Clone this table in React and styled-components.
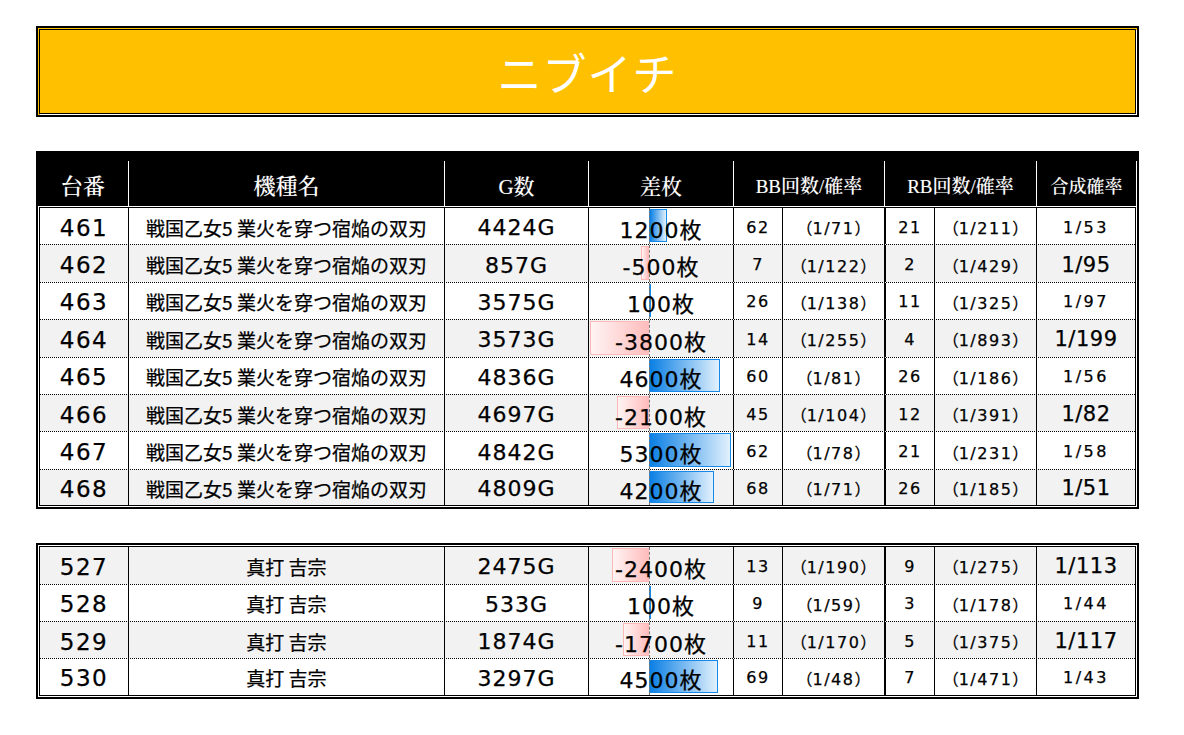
import React from "react";
import styled, { createGlobalStyle } from "styled-components";

const GlobalStyle = createGlobalStyle`
  body {
    margin: 0;
    background: #fff;
    font-family: "DejaVu Sans", "Noto Sans CJK JP", sans-serif;
  }
`;

const Page = styled.div`
  width: 1103px;
  padding: 26px 0 30px 36px;
  display: flex;
  flex-direction: column;
`;

const TitleFrame = styled.div`
  border: 2px solid #000;
  padding: 1px;
  background: #ffc000;
`;

const TitleInner = styled.div`
  border: 1px solid #000;
  box-shadow: 1px 1px 0 #fff;
  height: 83px;
  display: flex;
  align-items: center;
  justify-content: center;
  color: #fff;
  font-family: "Noto Sans CJK JP", sans-serif;
  font-size: 44px;
  letter-spacing: 1px;
`;

const Frame = styled.div`
  border: 2px solid #000;
  background: #fff;
  margin-top: ${(p) => p.$gap}px;
`;

const Header = styled.div`
  background: #000;
  padding-top: 8px;
  display: grid;
  grid-template-columns: 91px 316px 144px 145px 151px 152px 1fr;
  height: 45px;
`;

const HeadCell = styled.div`
  border-right: 1px solid #fff;
  display: flex;
  align-items: center;
  justify-content: center;
  color: #fff;
  font-family: "Liberation Serif", "Noto Serif CJK JP", "Noto Sans CJK JP", serif;
  font-size: ${(p) => p.$size}px;
  font-weight: 500;
  text-shadow: 0 0 1px #555;
  padding-top: 2px;
`;

const Body = styled.div`
  margin: 1px;
  border: 1px solid #000;
`;

const Row = styled.div`
  display: grid;
  grid-template-columns: 89px 316px 144px 145px 49px 103px 49px 102px 1fr;
  height: ${(p) => (p.$first || p.$last ? 36.4 : 37.4)}px;
  background: ${(p) => (p.$shade ? "#f2f2f2" : "#fff")};
  border-top: ${(p) => (p.$first ? "none" : "1px dotted #000")};
  box-sizing: border-box;
`;

const Cell = styled.div`
  position: relative;
  border-right: ${(p) => (p.$thick ? "2px" : p.$end ? "0" : "1px")} solid #000;
  display: flex;
  align-items: center;
  justify-content: center;
  color: #000;
  -webkit-text-stroke: 0.25px #000;
  white-space: nowrap;
  overflow: hidden;
`;

const BigNum = styled.span`
  font-family: "DejaVu Sans", sans-serif;
  font-size: 23px;
  letter-spacing: 1.5px;
  padding-top: 3px;
`;

const Name = styled.span`
  font-family: "Noto Sans CJK JP", sans-serif;
  font-size: 19px;
  padding-top: 2px;
`;

const MidNum = styled.span`
  position: relative;
  font-family: "DejaVu Sans", "Noto Sans CJK JP", sans-serif;
  font-size: 22px;
  letter-spacing: 1px;
  padding-top: 3px;
`;

const SmallNum = styled.span`
  font-family: "DejaVu Sans", "Noto Sans CJK JP", sans-serif;
  font-size: 16px;
  letter-spacing: 1.5px;
  padding-top: 2px;
`;

const Paren = styled.span`
  font-family: "Noto Sans CJK JP", sans-serif;
  letter-spacing: 0;
`;

const Combined = styled.span`
  font-family: "DejaVu Sans", sans-serif;
  font-size: ${(p) => (p.$big ? 21 : 16)}px;
  letter-spacing: ${(p) => (p.$big ? 0.5 : 2.5)}px;
  padding-top: 2px;
`;

const Axis = styled.div`
  position: absolute;
  left: 60px;
  top: 0;
  bottom: 0;
  border-left: 1px dashed #777;
`;

const Bar = styled.div`
  position: absolute;
  top: 1px;
  bottom: 2px;
  box-sizing: border-box;
  border: 1px solid ${(p) => (p.$neg ? "#ffb8b8" : "#1688e8")};
  background: ${(p) =>
    p.$neg
      ? "linear-gradient(to right, #fff4f4, #ffbcbc)"
      : "linear-gradient(to right, #0a7fe4, #e2f1fd)"};
`;

const AXIS = 60;
const SCALE = 0.0154;

const DiffBar = ({ v }) => {
  const w = Math.max(2, Math.abs(v) * SCALE);
  const style = v < 0 ? { left: AXIS - w, width: w } : { left: AXIS, width: w };
  return (
    <>
      <Bar $neg={v < 0} style={style} />
      <Axis />
    </>
  );
};

const group1 = [
  [461, 4424, 1200, 62, 71, 21, 211, 53],
  [462, 857, -500, 7, 122, 2, 429, 95],
  [463, 3575, 100, 26, 138, 11, 325, 97],
  [464, 3573, -3800, 14, 255, 4, 893, 199],
  [465, 4836, 4600, 60, 81, 26, 186, 56],
  [466, 4697, -2100, 45, 104, 12, 391, 82],
  [467, 4842, 5300, 62, 78, 21, 231, 58],
  [468, 4809, 4200, 68, 71, 26, 185, 51],
];

const group2 = [
  [527, 2475, -2400, 13, 190, 9, 275, 113],
  [528, 533, 100, 9, 59, 3, 178, 44],
  [529, 1874, -1700, 11, 170, 5, 375, 117],
  [530, 3297, 4500, 69, 48, 7, 471, 43],
];

const Prob = ({ n }) => (
  <SmallNum>
    <Paren>（</Paren>1/{n}<Paren>）</Paren>
  </SmallNum>
);

const DataRow = ({ r, name, shade, first, last }) => {
  const [no, g, diff, bb, bbp, rb, rbp, total] = r;
  return (
    <Row $shade={shade} $first={first} $last={last}>
      <Cell><BigNum>{no}</BigNum></Cell>
      <Cell><Name>{name}</Name></Cell>
      <Cell><MidNum>{g}G</MidNum></Cell>
      <Cell>
        <DiffBar v={diff} />
        <MidNum>{diff}枚</MidNum>
      </Cell>
      <Cell><SmallNum>{bb}</SmallNum></Cell>
      <Cell $thick><Prob n={bbp} /></Cell>
      <Cell><SmallNum>{rb}</SmallNum></Cell>
      <Cell><Prob n={rbp} /></Cell>
      <Cell $end><Combined $big={shade}>1/{total}</Combined></Cell>
    </Row>
  );
};

const Table = ({ rows, name, shadeEven }) => (
  <Body>
    {rows.map((r, i) => (
      <DataRow
        key={r[0]}
        r={r}
        name={name}
        shade={(i % 2 === 0) === shadeEven}
        first={i === 0}
        last={i === rows.length - 1}
      />
    ))}
  </Body>
);

const App = () => (
  <Page>
    <GlobalStyle />
    <TitleFrame>
      <TitleInner>ニブイチ</TitleInner>
    </TitleFrame>

    <Frame $gap={34}>
      <Header>
        <HeadCell $size={22}>台番</HeadCell>
        <HeadCell $size={22}>機種名</HeadCell>
        <HeadCell $size={21}>G数</HeadCell>
        <HeadCell $size={21}>差枚</HeadCell>
        <HeadCell $size={19}>BB回数/確率</HeadCell>
        <HeadCell $size={19}>RB回数/確率</HeadCell>
        <HeadCell $size={18}>合成確率</HeadCell>
      </Header>
      <Table rows={group1} name="戦国乙女5 業火を穿つ宿焔の双刃" shadeEven={false} />
    </Frame>

    <Frame $gap={34}>
      <Table rows={group2} name="真打 吉宗" shadeEven={true} />
    </Frame>
  </Page>
);

export default App;
